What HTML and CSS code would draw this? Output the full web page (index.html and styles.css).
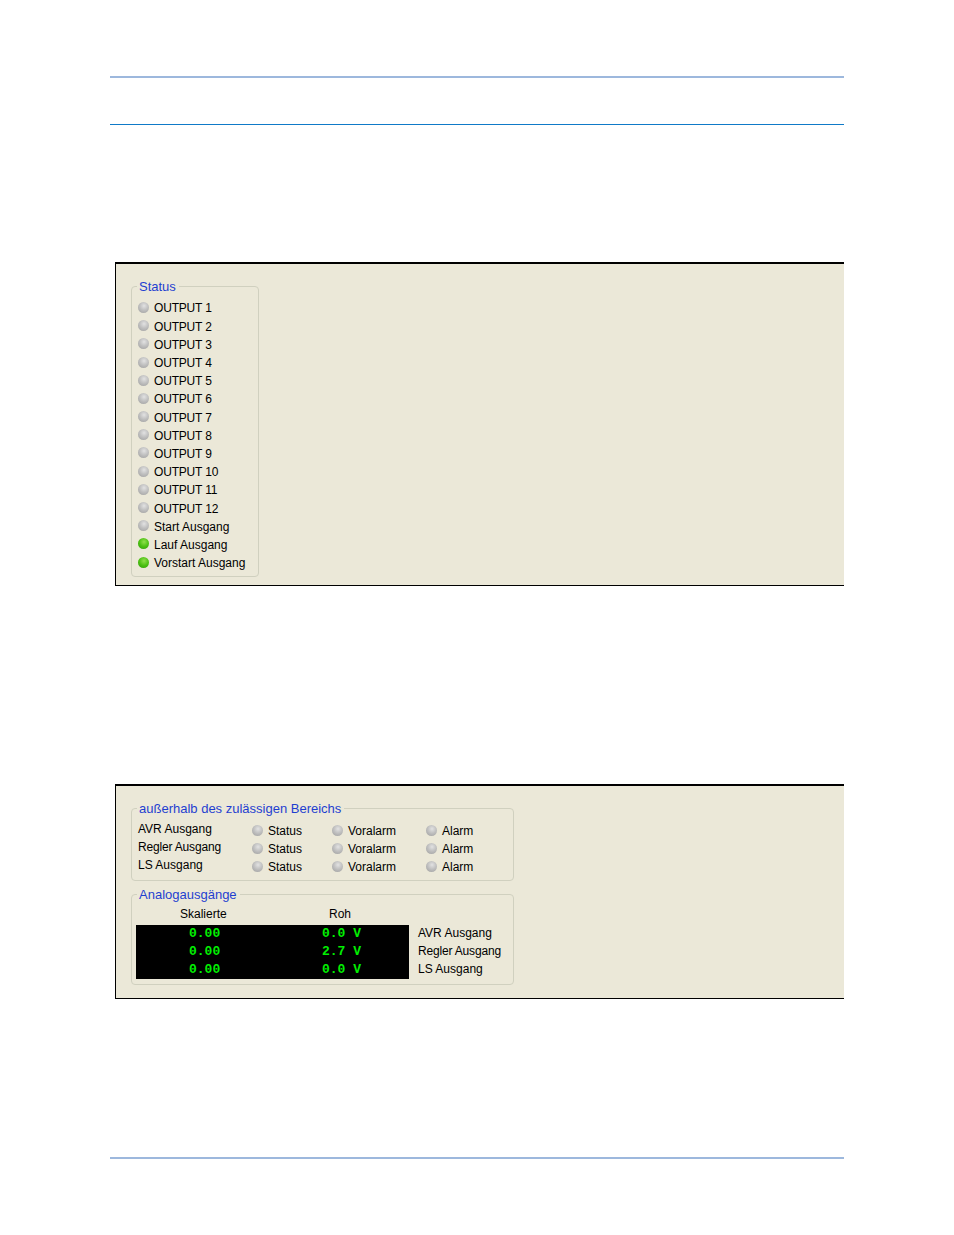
FILE: index.html
```html
<!DOCTYPE html>
<html lang="de">
<head>
<meta charset="utf-8">
<title>Status und Analogausgänge</title>
<link rel="stylesheet" href="styles.css">
</head>
<body>
<header class="head"></header>

<section class="panel panel-status">
  <fieldset class="box box-status">
    <legend>Status</legend>
    <ul class="leds">
      <li class="tight"><i class="led"></i>OUTPUT 1</li>
      <li class="tight"><i class="led"></i>OUTPUT 2</li>
      <li class="tight"><i class="led"></i>OUTPUT 3</li>
      <li class="tight"><i class="led"></i>OUTPUT 4</li>
      <li class="tight"><i class="led"></i>OUTPUT 5</li>
      <li class="tight"><i class="led"></i>OUTPUT 6</li>
      <li class="tight"><i class="led"></i>OUTPUT 7</li>
      <li class="tight"><i class="led"></i>OUTPUT 8</li>
      <li class="tight"><i class="led"></i>OUTPUT 9</li>
      <li class="tight"><i class="led"></i>OUTPUT 10</li>
      <li class="tight"><i class="led"></i>OUTPUT 11</li>
      <li class="tight"><i class="led"></i>OUTPUT 12</li>
      <li><i class="led"></i>Start Ausgang</li>
      <li><i class="led on"></i>Lauf Ausgang</li>
      <li><i class="led on"></i>Vorstart Ausgang</li>
    </ul>
  </fieldset>
</section>

<section class="panel panel-analog">
  <fieldset class="box box-range">
    <legend>außerhalb des zulässigen Bereichs</legend>
    <div class="range">
      <ul class="names">
        <li>AVR Ausgang</li>
        <li class="tight">Regler Ausgang</li>
        <li>LS Ausgang</li>
      </ul>
      <ul class="leds">
        <li><i class="led"></i>Status</li>
        <li><i class="led"></i>Status</li>
        <li><i class="led"></i>Status</li>
      </ul>
      <ul class="leds">
        <li><i class="led"></i>Voralarm</li>
        <li><i class="led"></i>Voralarm</li>
        <li><i class="led"></i>Voralarm</li>
      </ul>
      <ul class="leds">
        <li><i class="led"></i>Alarm</li>
        <li><i class="led"></i>Alarm</li>
        <li><i class="led"></i>Alarm</li>
      </ul>
    </div>
  </fieldset>
  <fieldset class="box box-analog">
    <legend>Analogausgänge</legend>
    <div class="analog">
      <div class="heads">
        <span class="h-scaled">Skalierte</span>
        <span class="h-raw">Roh</span>
      </div>
      <div class="readout">
        <div class="lcd">
          <div class="lcd-row"><span>0.00</span><span>0.0 V</span></div>
          <div class="lcd-row"><span>0.00</span><span>2.7 V</span></div>
          <div class="lcd-row"><span>0.00</span><span>0.0 V</span></div>
        </div>
        <ul class="outs">
          <li>AVR Ausgang</li>
          <li class="tight">Regler Ausgang</li>
          <li>LS Ausgang</li>
        </ul>
      </div>
    </div>
  </fieldset>
</section>

<footer class="foot"></footer>
</body>
</html>
```
FILE: styles.css
```css
* { box-sizing: border-box; }
html, body { margin: 0; padding: 0; background: #fff; }
body {
  height: 1235px;
  padding: 76px 110px 0;
  font: 12px/18px "Liberation Sans", Arial, sans-serif;
  color: #000;
  overflow: hidden;
}
ul { list-style: none; margin: 0; padding: 0; }
.tight { letter-spacing: -0.18px; }

.head {
  height: 49px;
  border-top: 2px solid #9db8dd;
  border-bottom: 1px solid #0f7ac8;
}
.foot {
  margin-top: 158px;
  border-top: 2px solid #9db8dd;
}

.panel {
  margin-left: 5px;
  background: #ebe8d8;
  border-top: 2px solid #000;
  border-left: 1px solid #000;
  border-bottom: 1px solid #000;
  padding: 14px 0 0 15px;
}
.panel-status { margin-top: 137px; height: 324px; }
.panel-analog { margin-top: 198px; height: 215px; }

.box {
  margin: 0;
  border: 1px solid #d0d0bf;
  border-radius: 4px;
  padding: 0;
  min-width: 0;
}
.box legend {
  margin-left: 5px;
  padding: 2px 3px 0 2px;
  color: #1f3fd0;
  font-size: 13px;
  line-height: 14px;
}
.box-status { width: 128px; height: 299px; }
.box-range { width: 383px; height: 81px; }
.box-analog { width: 383px; height: 99px; margin-top: 5px; }

.leds li {
  display: flex;
  align-items: center;
  height: 18.2px;
  white-space: nowrap;
}
.led {
  flex: none;
  width: 11px;
  height: 11px;
  margin: 0 5px 2px 0;
  border-radius: 50%;
  background: radial-gradient(circle at 55% 35%, #e2e2e2 0%, #c0c0c0 45%, #9c9c9c 100%);
}
.led.on {
  background: radial-gradient(circle at 55% 35%, #8fe04a 0%, #4cc012 50%, #2c9a08 100%);
}
.box-status .leds { padding: 5.4px 0 0 6px; }

.range {
  display: grid;
  grid-template-columns: 114px 80px 94px auto;
  padding: 0 0 0 6px;
}
.range .leds { padding-top: 6px; }
.names { padding-top: 4px; }
.names li { height: 18.2px; white-space: nowrap; }

.analog { padding: 0 0 0 4px; }
.heads {
  display: grid;
  grid-template-columns: 44px 149px auto;
  height: 23px;
  padding-top: 3px;
}
.readout { display: flex; }
.lcd {
  width: 273px;
  height: 54px;
  background: #000;
  color: #00f000;
  font: bold 13px/18px "Liberation Mono", "Courier New", monospace;
}
.lcd-row {
  display: grid;
  grid-template-columns: 133px auto;
  height: 18px;
  padding-left: 53px;
}
.outs { padding-left: 9px; margin-top: -1px; }
.outs li { height: 18px; white-space: nowrap; }

.h-scaled { grid-column: 2; }
.h-raw { grid-column: 3; }
```
